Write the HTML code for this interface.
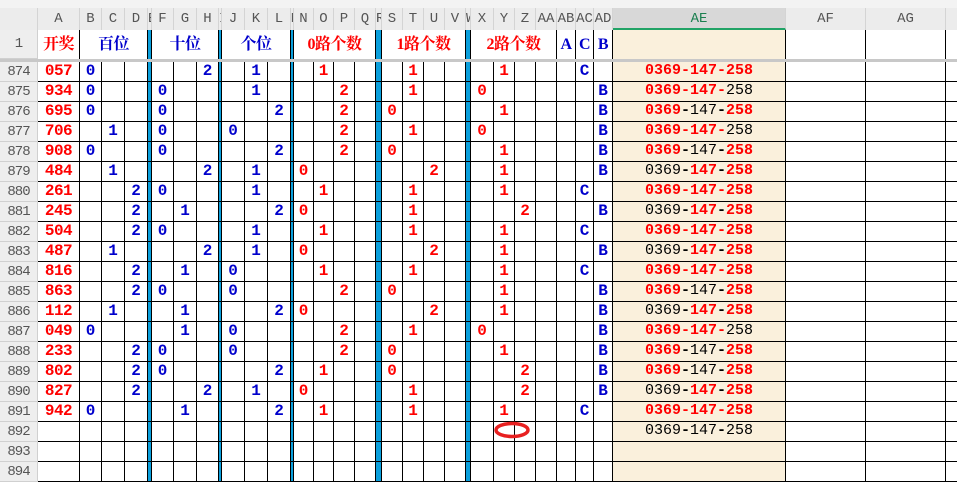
<!DOCTYPE html>
<html><head><meta charset="utf-8">
<style>
body{margin:0;width:957px;height:477px;overflow:hidden;background:#fff;position:relative;font-family:"Liberation Mono","Noto Sans CJK SC",monospace}
.c{position:absolute;box-sizing:border-box;text-align:center;white-space:nowrap;overflow:hidden}
.r{color:#f00}.b{color:#0000cc}.k{color:#000}
</style></head><body>
<div id="g"></div>
<svg style="position:absolute;left:0;top:0" width="957" height="477"><ellipse cx="512" cy="430" rx="16" ry="6.5" fill="none" stroke="#e82020" stroke-width="3.5"/></svg>
<script>
var names=["A","B","C","D","E","F","G","H","I","J","K","L","M","N","O","P","Q","R","S","T","U","V","W","X","Y","Z","AA","AB","AC","AD","AE","AF","AG","AH"];
var ed=[38,80,102,125,148,152,174,197,219,222,245,268,291,294,314,334,355,376,382,403,424,445,466,471,494,515,536,557,576,594,613,786,866,946,1000];
var blue={E:1,I:1,M:1,R:1,W:1};
var h="";
function cell(x,y,w,hh,st,cls,txt){h+='<div class="c '+(cls||'')+'" style="left:'+x+'px;top:'+y+'px;width:'+w+'px;height:'+hh+'px;'+st+'">'+(txt||'')+'</div>';}
cell(0,0,957,8,"background:#f3f3f3");
cell(0,8,957,22,"background:#ececec");
for(var i=0;i<names.length;i++){var x=ed[i],w=ed[i+1]-ed[i];var ae=names[i]=="AE";
cell(x,8,w,22,"border-right:1px solid #d4d4d4;font-size:14px;line-height:22px;font-family:'Liberation Mono',monospace;color:"+(ae?"#1a7f4f":"#555")+";"+(ae?"background:#d8d8d8;border-bottom:2px solid #21a366;":""),"",blue[names[i]]?names[i].slice(0,1):names[i]);}
cell(0,8,38,22,"border-right:1px solid #d4d4d4;background:#ececec");
var rows=["1"];for(var n=874;n<=894;n++)rows.push(""+n);
for(var j=0;j<rows.length;j++){var y=j==0?30:62+(j-1)*20,hh=j==0?29:20;
cell(0,y,38,hh,"background:#eeeeee;border-bottom:1px solid #d0d0d0;border-right:1px solid #d0d0d0;color:#555;font-size:14px;line-height:"+hh+"px;font-family:'Liberation Mono',monospace;letter-spacing:-1px","",rows[j]);}
cell(0,59,957,3,"background:#c8c8c8");
var spans=[["A","A","开奖","r"],["B","D","百位","b"],["E","E","",""],["F","H","十位","b"],["I","I","",""],["J","L","个位","b"],["M","M","",""],["N","Q","0路个数","r"],["R","R","",""],["S","V","1路个数","r"],["W","W","",""],["X","AA","2路个数","r"],["AB","AB","A","b"],["AC","AC","C","b"],["AD","AD","B","b"],["AE","AE","",""],["AF","AF","",""],["AG","AG","",""],["AH","AH","",""]];
spans.forEach(function(s){var a=names.indexOf(s[0]),b=names.indexOf(s[1]);var x=ed[a],w=ed[b+1]-x;
var bg=blue[s[0]]?"background:#0a9fdc;":(s[0]=="AE"?"background:#faf0dc;":"");
cell(x,30,w,29,bg+"border-right:1.5px solid #000;font-size:16px;font-weight:bold;line-height:29px;font-family:'Liberation Serif','Noto Serif CJK SC',serif;letter-spacing:-0.5px","",'<span class="'+s[3]+'">'+s[2]+'</span>');});
var D=[
["057",{B:0,H:2,K:1,O:1,T:1,Y:1,AC:"C"},"rrr"],
["934",{B:0,F:0,K:1,P:2,T:1,X:0,AD:"B"},"rrk"],
["695",{B:0,F:0,L:2,P:2,S:0,Y:1,AD:"B"},"rkr"],
["706",{C:1,F:0,J:0,P:2,T:1,X:0,AD:"B"},"rrk"],
["908",{B:0,F:0,L:2,P:2,S:0,Y:1,AD:"B"},"rkr"],
["484",{C:1,H:2,K:1,N:0,U:2,Y:1,AD:"B"},"krr"],
["261",{D:2,F:0,K:1,O:1,T:1,Y:1,AC:"C"},"rrr"],
["245",{D:2,G:1,L:2,N:0,T:1,Z:2,AD:"B"},"krr"],
["504",{D:2,F:0,K:1,O:1,T:1,Y:1,AC:"C"},"rrr"],
["487",{C:1,H:2,K:1,N:0,U:2,Y:1,AD:"B"},"krr"],
["816",{D:2,G:1,J:0,O:1,T:1,Y:1,AC:"C"},"rrr"],
["863",{D:2,F:0,J:0,P:2,S:0,Y:1,AD:"B"},"rkr"],
["112",{C:1,G:1,L:2,N:0,U:2,Y:1,AD:"B"},"krr"],
["049",{B:0,G:1,J:0,P:2,T:1,X:0,AD:"B"},"rrk"],
["233",{D:2,F:0,J:0,P:2,S:0,Y:1,AD:"B"},"rkr"],
["802",{D:2,F:0,L:2,O:1,S:0,Z:2,AD:"B"},"rkr"],
["827",{D:2,H:2,K:1,N:0,T:1,Z:2,AD:"B"},"krr"],
["942",{B:0,G:1,L:2,O:1,T:1,Y:1,AC:"C"},"rrr"],
["",{},"kkk"],["",{},""],["",{},""]];
var redcols={N:1,O:1,P:1,Q:1,S:1,T:1,U:1,V:1,X:1,Y:1,Z:1,AA:1};
D.forEach(function(r,k){var y=62+k*20;
for(var i=0;i<names.length;i++){var nm=names[i],x=ed[i],w=ed[i+1]-x;var st="border-right:1.5px solid #000;border-bottom:1.5px solid #000;line-height:18px;font-weight:bold;font-size:16px;";
var txt="",cls="";
if(blue[nm])st+="background:#0a9fdc;";
if(nm=="AE"){st+="background:#faf0dc;font-size:15px;";if(r[2]){var p=["0369","147","258"];txt=p.map(function(s,q){return '<span class="'+r[2][q]+'" style="font-weight:'+(r[2][q]=="r"?"bold":"normal")+'">'+s+'</span>';}).join('<span class="'+(r[2][0]==r[2][1]&&r[2][0]=="r"?"r":"k")+'">-</span>');}}
if(nm=="A"){txt=r[0];cls="r";st+="letter-spacing:-0.5px;";}
if(r[1][nm]!==undefined){txt=""+r[1][nm];cls=redcols[nm]?"r":"b";}
cell(x,y,w,20,st,cls,txt);}});
document.getElementById("g").innerHTML=h;
</script>
</body></html>
